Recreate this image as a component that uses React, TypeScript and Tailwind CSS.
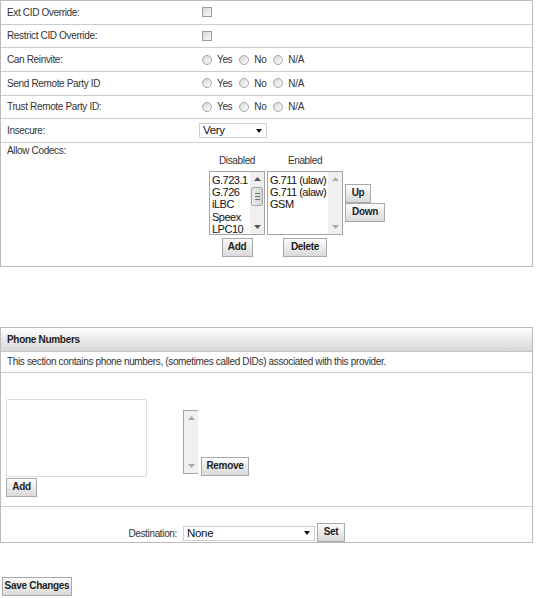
import type { ReactNode } from "react";

const LABEL = "text-[10px] tracking-[-0.35px] text-[#333]";

function Btn({ w, children, className = "" }: { w: string; children: ReactNode; className?: string }) {
  return (
    <button
      type="button"
      className={`${w} block h-[19px] shrink-0 border border-[#a9a9a9] bg-linear-to-b from-[#fcfcfc] to-[#dadada] text-[10px] font-bold leading-none tracking-[-0.3px] text-[#1e1e1e] ${className}`}
    >
      {children}
    </button>
  );
}

function Check() {
  return <span className="ml-[3px] block h-[10px] w-[10px] border border-[#9c9c9c] bg-linear-to-br from-[#d8d8d8] to-[#fbfbfb]" />;
}

function Radio() {
  return <span className="block h-[10px] w-[10px] rounded-full border border-[#a6a6a6] bg-linear-to-br from-[#d6d6d6] to-[#fdfdfd]" />;
}

function YesNo() {
  return (
    <div className="ml-[3px] flex items-center text-[10px] tracking-[-0.35px] text-[#333]">
      <Radio />
      <span className="ml-[5px]">Yes</span>
      <span className="ml-[7px]"><Radio /></span>
      <span className="ml-[5px]">No</span>
      <span className="ml-[7px]"><Radio /></span>
      <span className="ml-[5px]">N/A</span>
    </div>
  );
}

function Arrow({ up, dim }: { up?: boolean; dim?: boolean }) {
  return (
    <svg width="7" height="4" viewBox="0 0 7 4" className="mx-auto">
      <path d={up ? "M0 4 L3.5 0 L7 4 Z" : "M0 0 L3.5 4 L7 0 Z"} fill={dim ? "#a8a8a8" : "#555"} />
    </svg>
  );
}

function ScrollBar({ thumb, dim }: { thumb?: boolean; dim?: boolean }) {
  return (
    <div className="flex h-full w-[14px] shrink-0 flex-col bg-[#f0f0f0]">
      <div className="flex h-[14px] items-center">
        <Arrow up dim={dim} />
      </div>
      <div className="flex-1 px-[1px]">
        {thumb && (
          <div className="mt-[1px] flex h-[19px] flex-col items-center justify-center gap-[2px] rounded-[2px] border border-[#a8a8a8] bg-linear-to-r from-[#e9e9e9] to-[#d6d6d6]">
            <span className="block h-px w-[5px] bg-[#777]" />
            <span className="block h-px w-[5px] bg-[#777]" />
            <span className="block h-px w-[5px] bg-[#777]" />
          </div>
        )}
      </div>
      <div className="flex h-[14px] items-center">
        <Arrow dim={dim} />
      </div>
    </div>
  );
}

function ListBox({ items, w, thumb }: { items: string[]; w: string; thumb?: boolean }) {
  return (
    <div className={`${w} flex h-[64px] border border-[#a5a5a5] bg-white`}>
      <div className="flex-1 overflow-hidden pl-[2px] pt-[2px] text-[11px] leading-[12.25px] tracking-[-0.5px] text-[#111]">
        {items.map((it) => (
          <div key={it} className="whitespace-nowrap">{it}</div>
        ))}
      </div>
      <ScrollBar thumb={thumb} dim={!thumb} />
    </div>
  );
}

function Select({ value, w }: { value: string; w: string }) {
  return (
    <div className={`${w} flex h-[15px] items-center justify-between border border-[#cfcfcf] bg-white pl-[3px] pr-[4px] text-[11.5px] tracking-[-0.3px] text-[#111]`}>
      <span>{value}</span>
      <svg width="6" height="4" viewBox="0 0 6 4">
        <path d="M0 0 L3 4 L6 0 Z" fill="#111" />
      </svg>
    </div>
  );
}

function Row({ label, children }: { label: string; children: ReactNode }) {
  return (
    <div className="flex h-[23.67px] items-center border-b border-[#cdcdcd]">
      <div className={`w-[198px] pl-[6px] ${LABEL}`}>{label}</div>
      <div className="flex items-center">{children}</div>
    </div>
  );
}

export default function App() {
  return (
    <div className="min-h-[599px] bg-white font-['Liberation_Sans',Arial,sans-serif]">
      <div className="w-[533px] border border-[#bcbcbc]">
        <Row label="Ext CID Override:">
          <Check />
        </Row>
        <Row label="Restrict CID Override:">
          <Check />
        </Row>
        <Row label="Can Reinvite:">
          <YesNo />
        </Row>
        <Row label="Send Remote Party ID">
          <YesNo />
        </Row>
        <Row label="Trust Remote Party ID:">
          <YesNo />
        </Row>
        <Row label="Insecure:">
          <Select value="Very" w="w-[68px]" />
        </Row>
        <div className="flex h-[123px]">
          <div className={`w-[198px] pl-[6px] pt-[2px] leading-[12px] ${LABEL}`}>Allow Codecs:</div>
          <div className="ml-[10px] pt-[12px]">
            <div className="grid grid-cols-[56px_76px_auto] gap-x-[2px]">
              <div className={`text-center leading-[12px] ${LABEL}`}>Disabled</div>
              <div className={`text-center leading-[12px] ${LABEL}`}>Enabled</div>
              <div />
              <div className="mt-[4px]">
                <ListBox w="w-[56px]" items={["G.723.1", "G.726", "iLBC", "Speex", "LPC10"]} thumb />
              </div>
              <div className="mt-[4px]">
                <ListBox w="w-[76px]" items={["G.711 (ulaw)", "G.711 (alaw)", "GSM"]} />
              </div>
              <div className="mt-[4px] flex flex-col justify-center">
                <Btn w="w-[26px]">Up</Btn>
                <Btn w="w-[40px]">Down</Btn>
              </div>
              <div className="mt-[3px] flex justify-center">
                <Btn w="w-[31px]">Add</Btn>
              </div>
              <div className="mt-[3px] flex justify-center">
                <Btn w="w-[44px]">Delete</Btn>
              </div>
              <div />
            </div>
          </div>
        </div>
      </div>

      <div className="mt-[60px] w-[533px] border border-[#bcbcbc]">
        <div className="flex h-[24px] items-center border-b border-[#c4c4c4] bg-linear-to-b from-white to-[#d7d7d7] pl-[6px] text-[10px] font-bold tracking-[-0.3px] text-[#222]">
          Phone Numbers
        </div>
        <div className={`flex h-[21px] items-center border-b border-[#cdcdcd] pl-[6px] ${LABEL}`}>
          This section contains phone numbers, (sometimes called DIDs) associated with this provider.
        </div>
        <div className="flex h-[134px] items-start border-b border-[#cdcdcd] pl-[5px] pt-[26px]">
          <div className="flex flex-col">
            <div className="h-[78px] w-[141px] rounded-[2px] border border-[#dcdcdc] bg-white" />
            <Btn w="w-[31px]" className="mt-[1px]">Add</Btn>
          </div>
          <div className="ml-[36px] mt-[11px] flex items-end">
            <div className="h-[64px] w-[15px] border border-[#a5a5a5]">
              <ScrollBar dim />
            </div>
            <Btn w="w-[48px]" className="-mb-[2px] ml-[3px]">Remove</Btn>
          </div>
        </div>
        <div className="flex h-[35px] items-end">
          <div className={`mb-[2px] w-[176px] text-right leading-[12px] ${LABEL}`}>Destination:</div>
          <div className="mb-[1px] ml-[6px]">
            <Select value="None" w="w-[132px]" />
          </div>
          <Btn w="w-[28px]" className="ml-[2px]">Set</Btn>
        </div>
      </div>

      <div className="mt-[34px] flex pl-[2px]">
        <Btn w="w-[70px]">Save Changes</Btn>
      </div>
    </div>
  );
}
